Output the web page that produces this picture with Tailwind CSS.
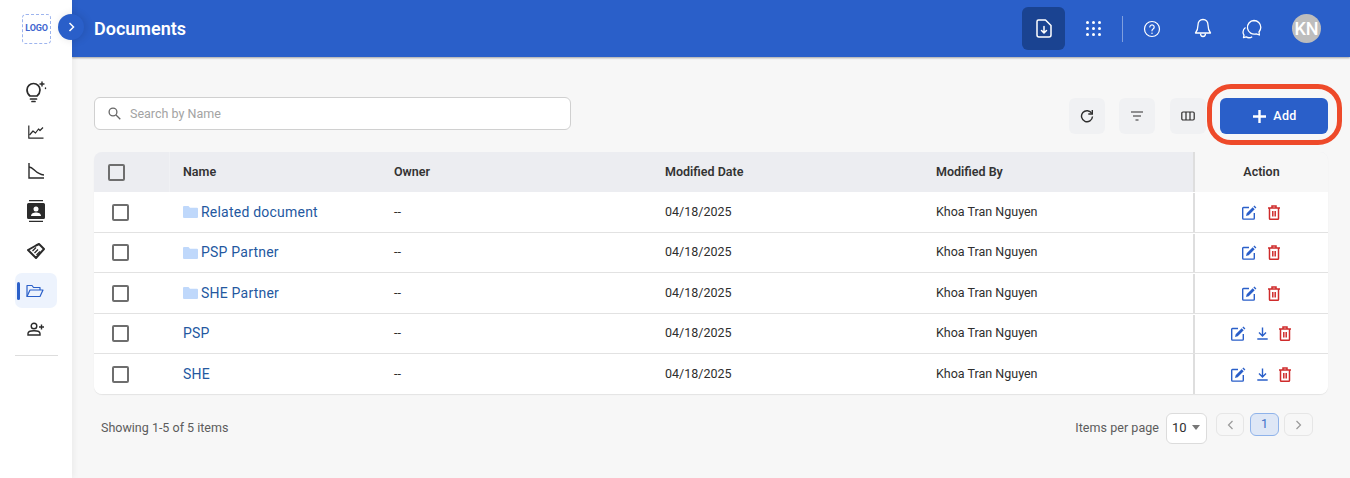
<!DOCTYPE html>
<html lang="en">
<head>
    <meta charset="UTF-8">
    <title>Documents</title>
    <script src="https://cdn.jsdelivr.net/npm/@tailwindcss/browser@4"></script>
</head>
<body class="h-[478px] w-[1350px] overflow-hidden bg-[#f7f7f7] font-['Roboto',sans-serif] text-[#2e2e2e]">
<div class="relative flex h-[478px]">
    <!-- sidebar -->
    <aside class="z-10 flex w-[72px] shrink-0 flex-col items-center bg-white shadow-[2px_0_6px_rgba(0,0,0,.05)]">
        <div class="ml-[1px] mt-[14px] flex h-[30px] w-[29px] items-center justify-center rounded-[4px] border border-dashed border-[#9db4ee] text-[9px] font-bold tracking-[-.2px] text-[#3f66cf]">LOGO</div>
        <nav class="mt-[27px] flex w-full flex-col items-center text-[#2b2b2b]">
            <div class="flex h-[40px] w-full items-center justify-center pt-[2px]">
                <svg width="22" height="22" viewBox="0 0 22 22" fill="none" stroke="currentColor" stroke-width="1.7" stroke-linecap="round" stroke-linejoin="round"><path d="M5 15c-1.500-1.300-3-3-3-6a6.500 6.500 0 0 1 13 0c0 3-1.500 4.700-3 6z"/><path d="M5.500 18h6M7 20.500h3"/><path d="M17 1v4M15 3h4M20.500 7v.5" stroke-width="1.4"/></svg>
            </div>
            <div class="flex h-[42px] w-full items-center justify-center">
                <svg width="16" height="14" viewBox="0 0 16 14" fill="none" stroke="currentColor" stroke-width="1.2" stroke-linejoin="round"><path d="M.8 .5v12.700h14.700"/><path d="M1.500 10l3.500-4 2.500 2 3-4 1.500 1.500 3-3"/></svg>
            </div>
            <div class="flex h-[36px] w-full items-center justify-center">
                <svg width="16" height="16" viewBox="0 0 16 16" fill="none" stroke="currentColor" stroke-width="1.4"><path d="M1 0v15h15"/><path d="M1 4c5 0 6 7 15 8"/></svg>
            </div>
            <div class="flex h-[44px] w-full items-center justify-center">
                <svg width="20" height="24" viewBox="0 0 20 24"><path fill="currentColor" d="M3 1h14v1.300H3zM3 21.700h14V23H3zM2.500 4h15A1.500 1.500 0 0 1 19 5.500v13a1.500 1.500 0 0 1-1.500 1.500h-15A1.500 1.500 0 0 1 1 18.500v-13A1.500 1.500 0 0 1 2.500 4z"/><circle cx="10" cy="10" r="2.500" fill="#fff"/><path fill="#fff" d="M5 17c0-2.500 2.500-3.500 5-3.500s5 1 5 3.500z"/></svg>
            </div>
            <div class="flex h-[36px] w-full items-center justify-center">
                <svg width="18" height="16" viewBox="0 0 18 16" fill="none" stroke="currentColor" stroke-width="2" stroke-linejoin="round"><path d="M9 2.500l3-1.500 5 5-8 9-8-8z"/><path d="M5.500 8l3.500-3.500M7.500 10l3.500-3.500M9.500 12L13 8.500" stroke-width="1.3"/></svg>
            </div>
            <div class="mt-[4px] flex h-[35px] w-[42px] items-center rounded-[7px] bg-[#edf3fd] pl-[2px]">
                <span class="h-[18px] w-[3px] rounded-full bg-[#2b60c9]"></span>
                <svg class="ml-[6px]" width="18" height="14" viewBox="0 0 18 14" fill="none" stroke="#2b60c9" stroke-width="1.2" stroke-linejoin="round"><path d="M1 12.500V1.500h5l1.500 2H14v2.500"/><path d="M1 12.500l3-6.500h13l-3 6.500z"/></svg>
            </div>
            <div class="flex h-[42px] w-full items-center justify-center">
                <svg width="18" height="14" viewBox="0 0 18 14" fill="none" stroke="currentColor" stroke-width="1.4"><circle cx="7" cy="4" r="2.800"/><path d="M1 13v-1.500c0-1.600 3-2.700 6-2.700s6 1.100 6 2.700V13z"/><path d="M14.500 2.500v5M12 5h5"/></svg>
            </div>
            <div class="mt-[5px] h-px w-[43px] bg-[#dddddd]"></div>
        </nav>
    </aside>

    <div class="flex min-w-0 flex-1 flex-col">
        <!-- top bar -->
        <header class="flex h-[57px] shrink-0 items-center justify-between bg-[#2a5fc9] pl-[22px] pr-[29px] shadow-[0_1px_2px_rgba(0,0,0,.35)]">
            <h1 class="text-[18px] font-semibold text-white">Documents</h1>
            <div class="flex items-center text-white">
                <div class="flex h-[43px] w-[43px] items-center justify-center rounded-[6px] bg-[#1a4391]">
                    <svg width="16" height="19" viewBox="0 0 16 19" fill="none" stroke="currentColor" stroke-width="1.5" stroke-linejoin="round" stroke-linecap="round"><path d="M2.500 1h7L15 6.500V16a2 2 0 0 1-2 2H3a2 2 0 0 1-2-2V2.500A1.500 1.500 0 0 1 2.500 1z"/><path d="M8 7.500v6M5.500 11.500L8 14l2.500-2.500"/></svg>
                </div>
                <div class="ml-[21px] grid grid-cols-3 gap-x-[3px] gap-y-[3px]">
                    <i class="h-[3px] w-[3px] rounded-full bg-white"></i><i class="h-[3px] w-[3px] rounded-full bg-white"></i><i class="h-[3px] w-[3px] rounded-full bg-white"></i>
                    <i class="h-[3px] w-[3px] rounded-full bg-white"></i><i class="h-[3px] w-[3px] rounded-full bg-white"></i><i class="h-[3px] w-[3px] rounded-full bg-white"></i>
                    <i class="h-[3px] w-[3px] rounded-full bg-white"></i><i class="h-[3px] w-[3px] rounded-full bg-white"></i><i class="h-[3px] w-[3px] rounded-full bg-white"></i>
                </div>
                <div class="ml-[21px] h-[26px] w-px bg-white/40"></div>
                <svg class="ml-[20px]" width="18" height="18" viewBox="0 0 18 18" fill="none" stroke="currentColor" stroke-width="1.2" stroke-linecap="round"><circle cx="9" cy="9" r="7.500"/><path d="M6.800 7a2.200 2.200 0 1 1 3.300 2c-.8.500-1.100.900-1.100 1.800"/><path d="M9 13.200v.1" stroke-width="1.5"/></svg>
                <svg class="ml-[33px]" width="18" height="21" viewBox="0 0 18 21" fill="none" stroke="currentColor" stroke-width="1.3" stroke-linejoin="round"><path d="M9 1.500c-3 0-5 2.300-5 5.500 0 4-1 6-2.500 8h15C15 13 14 11 14 7c0-3.200-2-5.500-5-5.500z"/><path d="M6.500 15.500a2.500 3 0 0 0 5 0"/></svg>
                <svg class="ml-[30px]" width="20" height="20" viewBox="0 0 20 20" fill="none" stroke="currentColor" stroke-width="1.3" stroke-linejoin="round"><path d="M12 1.500a6.800 6.800 0 0 1 6.800 6.800c0 2-.8 3.500-1.800 4.700l.4 3-3.200-1.200A6.800 6.800 0 1 1 12 1.500z"/><path d="M3.500 8.500C2 9.500 1 11 1 13c0 1.200.4 2.300 1 3.200L1.500 18.700l2.700-.8c1.600 1 4 1.100 6-.2"/></svg>
                <div class="ml-[30px] flex h-[29px] w-[29px] items-center justify-center rounded-full bg-[#bdbdbd] text-[18px] font-medium text-white">KN</div>
            </div>
        </header>

        <main class="flex-1 px-[22px]">
            <!-- toolbar -->
            <div class="mt-[40px] flex h-[37px] items-start">
                <div class="flex h-[33px] w-[477px] items-center rounded-[6px] border border-[#d0d0d0] bg-white pl-[13px]">
                    <svg width="13" height="13" viewBox="0 0 13 13" fill="none" stroke="#666" stroke-width="1.3"><circle cx="5" cy="5" r="3.900"/><path d="M8 8l4.300 4.300"/></svg>
                    <span class="ml-[9px] pt-[2px] text-[12.5px] text-[#a3a3a3]">Search by Name</span>
                </div>
                <div class="ml-auto mt-[1px] flex h-[36px] w-[36px] items-center justify-center rounded-[6px] bg-[#f0f1f3]">
                    <svg width="14" height="14" viewBox="0 0 14 14" fill="none" stroke="#2e2e2e" stroke-width="1.4"><path d="M11.800 4.500A5.500 5.500 0 1 0 12.500 7.500"/><path d="M12.300 1v4h-4"/></svg>
                </div>
                <div class="ml-[14px] mt-[1px] flex h-[36px] w-[36px] items-center justify-center rounded-[6px] bg-[#f0f1f3]">
                    <svg width="14" height="10" viewBox="0 0 14 10" fill="none" stroke="#2e2e2e" stroke-width="1.2"><path d="M1 1h12M3 5h8M5.500 9h3"/></svg>
                </div>
                <div class="ml-[15px] mt-[1px] flex h-[36px] w-[36px] items-center justify-center rounded-[6px] bg-[#f0f1f3]">
                    <svg width="14" height="10" viewBox="0 0 14 10" fill="none" stroke="#2e2e2e" stroke-width="1.2"><rect x=".8" y="1" width="12.400" height="8" rx="1.200"/><path d="M5 1v8M9 1v8"/></svg>
                </div>
                <button class="ml-[14px] mt-[1px] flex h-[36px] w-[108px] items-center justify-center gap-[7px] rounded-[6px] bg-[#2a5fc9] pl-[2px] text-[12.5px] font-medium tracking-[.3px] text-white">
                    <svg width="13" height="13" viewBox="0 0 13 13" stroke="#fff" stroke-width="2.4"><path d="M6.500 0v13M0 6.500h13"/></svg>
                    Add
                </button>
            </div>

            <!-- table -->
            <div class="mt-[18px] overflow-hidden rounded-[8px] text-[12.5px] shadow-[0_1px_1px_rgba(0,0,0,.08)]">
                <div class="flex h-[40px] items-center bg-[#ecedf1] font-semibold text-[#333]">
                    <div class="flex h-full w-[76px] items-center border-r border-[#f0f1f4] pl-[14px]"><span class="h-[17px] w-[17px] rounded-[2px] border-2 border-[#6e6e6e]"></span></div>
                    <div class="w-[210px] pl-[13px]">Name</div>
                    <div class="w-[271px] pl-[14px]">Owner</div>
                    <div class="w-[271px] pl-[14px]">Modified Date</div>
                    <div class="w-[271px] pl-[14px]">Modified By</div>
                    <div class="flex h-full w-[135px] items-center justify-center border-l-2 border-[#dedede] bg-[#f7f7f7]">Action</div>
                </div>

                <div class="flex h-[40.5px] items-center border-b border-[#e2e2e2] bg-white pt-[1px]">
                    <div class="w-[76px] pl-[18px]"><span class="block h-[17px] w-[17px] rounded-[2px] border-2 border-[#6e6e6e]"></span></div>
                    <div class="flex w-[210px] items-center gap-[3px] pl-[13px] text-[14px] tracking-[.22px] text-[#24589f]"><svg width="15" height="12" viewBox="0 0 15 12" fill="#bfd8fb"><path d="M0 1a1 1 0 0 1 1-1h4.500l1.500 1.800h7a1 1 0 0 1 1 1V11a1 1 0 0 1-1 1H1a1 1 0 0 1-1-1z"/></svg>Related document</div>
                    <div class="w-[271px] pl-[14px]">--</div>
                    <div class="w-[271px] pl-[14px]">04/18/2025</div>
                    <div class="w-[271px] pl-[14px]">Khoa Tran Nguyen</div>
                    <div class="flex h-full w-[135px] items-center justify-center gap-[11px] border-l-2 border-[#dedede] pr-[2px]">
                        <svg width="15" height="15" viewBox="0 0 15 15" fill="none" stroke="#2a5fc9" stroke-width="1.4"><path d="M7 2.500H1.500a.8.800 0 0 0-.8.800v10a.8.800 0 0 0 .8.800h10a.8.800 0 0 0 .8-.8V8"/><path fill="#2a5fc9" stroke="none" d="M12.400.6l2 2-1 1-2-2zM10.700 2.300l2 2-6 6-2.700.700.700-2.700z"/></svg>
                        <svg width="12" height="15" viewBox="0 0 12 15" fill="none" stroke="#cf2b2b" stroke-width="1.5"><path d="M0 3h12M4 3V1h4v2M1.500 3v10.500a.8.800 0 0 0 .8.800h7.400a.8.800 0 0 0 .8-.8V3M4.800 6v5.500M7.200 6v5.500"/></svg>
                    </div>
                </div>

                <div class="flex h-[40.5px] items-center border-b border-[#e2e2e2] bg-white pt-[1px]">
                    <div class="w-[76px] pl-[18px]"><span class="block h-[17px] w-[17px] rounded-[2px] border-2 border-[#6e6e6e]"></span></div>
                    <div class="flex w-[210px] items-center gap-[3px] pl-[13px] text-[14px] tracking-[.22px] text-[#24589f]"><svg width="15" height="12" viewBox="0 0 15 12" fill="#bfd8fb"><path d="M0 1a1 1 0 0 1 1-1h4.500l1.500 1.800h7a1 1 0 0 1 1 1V11a1 1 0 0 1-1 1H1a1 1 0 0 1-1-1z"/></svg>PSP Partner</div>
                    <div class="w-[271px] pl-[14px]">--</div>
                    <div class="w-[271px] pl-[14px]">04/18/2025</div>
                    <div class="w-[271px] pl-[14px]">Khoa Tran Nguyen</div>
                    <div class="flex h-full w-[135px] items-center justify-center gap-[11px] border-l-2 border-[#dedede] pr-[2px]">
                        <svg width="15" height="15" viewBox="0 0 15 15" fill="none" stroke="#2a5fc9" stroke-width="1.4"><path d="M7 2.500H1.500a.8.800 0 0 0-.8.800v10a.8.800 0 0 0 .8.800h10a.8.800 0 0 0 .8-.8V8"/><path fill="#2a5fc9" stroke="none" d="M12.400.6l2 2-1 1-2-2zM10.700 2.300l2 2-6 6-2.700.700.700-2.700z"/></svg>
                        <svg width="12" height="15" viewBox="0 0 12 15" fill="none" stroke="#cf2b2b" stroke-width="1.5"><path d="M0 3h12M4 3V1h4v2M1.500 3v10.500a.8.800 0 0 0 .8.800h7.400a.8.800 0 0 0 .8-.8V3M4.800 6v5.500M7.200 6v5.500"/></svg>
                    </div>
                </div>

                <div class="flex h-[40.5px] items-center border-b border-[#e2e2e2] bg-white pt-[1px]">
                    <div class="w-[76px] pl-[18px]"><span class="block h-[17px] w-[17px] rounded-[2px] border-2 border-[#6e6e6e]"></span></div>
                    <div class="flex w-[210px] items-center gap-[3px] pl-[13px] text-[14px] tracking-[.22px] text-[#24589f]"><svg width="15" height="12" viewBox="0 0 15 12" fill="#bfd8fb"><path d="M0 1a1 1 0 0 1 1-1h4.500l1.500 1.800h7a1 1 0 0 1 1 1V11a1 1 0 0 1-1 1H1a1 1 0 0 1-1-1z"/></svg>SHE Partner</div>
                    <div class="w-[271px] pl-[14px]">--</div>
                    <div class="w-[271px] pl-[14px]">04/18/2025</div>
                    <div class="w-[271px] pl-[14px]">Khoa Tran Nguyen</div>
                    <div class="flex h-full w-[135px] items-center justify-center gap-[11px] border-l-2 border-[#dedede] pr-[2px]">
                        <svg width="15" height="15" viewBox="0 0 15 15" fill="none" stroke="#2a5fc9" stroke-width="1.4"><path d="M7 2.500H1.500a.8.800 0 0 0-.8.800v10a.8.800 0 0 0 .8.800h10a.8.800 0 0 0 .8-.8V8"/><path fill="#2a5fc9" stroke="none" d="M12.400.6l2 2-1 1-2-2zM10.700 2.300l2 2-6 6-2.700.700.700-2.700z"/></svg>
                        <svg width="12" height="15" viewBox="0 0 12 15" fill="none" stroke="#cf2b2b" stroke-width="1.5"><path d="M0 3h12M4 3V1h4v2M1.500 3v10.500a.8.800 0 0 0 .8.800h7.400a.8.800 0 0 0 .8-.8V3M4.800 6v5.500M7.200 6v5.500"/></svg>
                    </div>
                </div>

                <div class="flex h-[40.5px] items-center border-b border-[#e2e2e2] bg-white pt-[1px]">
                    <div class="w-[76px] pl-[18px]"><span class="block h-[17px] w-[17px] rounded-[2px] border-2 border-[#6e6e6e]"></span></div>
                    <div class="w-[210px] pl-[13px] text-[14px] tracking-[.22px] text-[#24589f]">PSP</div>
                    <div class="w-[271px] pl-[14px]">--</div>
                    <div class="w-[271px] pl-[14px]">04/18/2025</div>
                    <div class="w-[271px] pl-[14px]">Khoa Tran Nguyen</div>
                    <div class="flex h-full w-[135px] items-center justify-center gap-[11px] border-l-2 border-[#dedede] pr-[2px]">
                        <svg width="15" height="15" viewBox="0 0 15 15" fill="none" stroke="#2a5fc9" stroke-width="1.4"><path d="M7 2.500H1.500a.8.800 0 0 0-.8.800v10a.8.800 0 0 0 .8.800h10a.8.800 0 0 0 .8-.8V8"/><path fill="#2a5fc9" stroke="none" d="M12.400.6l2 2-1 1-2-2zM10.700 2.300l2 2-6 6-2.700.700.700-2.700z"/></svg>
                        <svg width="11" height="13" viewBox="0 0 11 13" fill="none" stroke="#2a5fc9" stroke-width="1.4"><path d="M5.500 .5v8M2 5.500l3.500 3.500L9 5.500M.3 12h10.400"/></svg>
                        <svg width="12" height="15" viewBox="0 0 12 15" fill="none" stroke="#cf2b2b" stroke-width="1.5"><path d="M0 3h12M4 3V1h4v2M1.500 3v10.500a.8.800 0 0 0 .8.800h7.400a.8.800 0 0 0 .8-.8V3M4.800 6v5.500M7.200 6v5.500"/></svg>
                    </div>
                </div>

                <div class="flex h-[40px] items-center bg-white">
                    <div class="w-[76px] pl-[18px]"><span class="block h-[17px] w-[17px] rounded-[2px] border-2 border-[#6e6e6e]"></span></div>
                    <div class="w-[210px] pl-[13px] text-[14px] tracking-[.22px] text-[#24589f]">SHE</div>
                    <div class="w-[271px] pl-[14px]">--</div>
                    <div class="w-[271px] pl-[14px]">04/18/2025</div>
                    <div class="w-[271px] pl-[14px]">Khoa Tran Nguyen</div>
                    <div class="flex h-full w-[135px] items-center justify-center gap-[11px] border-l-2 border-[#dedede] pr-[2px]">
                        <svg width="15" height="15" viewBox="0 0 15 15" fill="none" stroke="#2a5fc9" stroke-width="1.4"><path d="M7 2.500H1.500a.8.800 0 0 0-.8.800v10a.8.800 0 0 0 .8.800h10a.8.800 0 0 0 .8-.8V8"/><path fill="#2a5fc9" stroke="none" d="M12.400.6l2 2-1 1-2-2zM10.700 2.300l2 2-6 6-2.700.700.700-2.700z"/></svg>
                        <svg width="11" height="13" viewBox="0 0 11 13" fill="none" stroke="#2a5fc9" stroke-width="1.4"><path d="M5.500 .5v8M2 5.500l3.500 3.500L9 5.500M.3 12h10.400"/></svg>
                        <svg width="12" height="15" viewBox="0 0 12 15" fill="none" stroke="#cf2b2b" stroke-width="1.5"><path d="M0 3h12M4 3V1h4v2M1.500 3v10.500a.8.800 0 0 0 .8.800h7.400a.8.800 0 0 0 .8-.8V3M4.800 6v5.500M7.200 6v5.500"/></svg>
                    </div>
                </div>
            </div>

            <!-- pagination -->
            <div class="mt-[19px] flex items-start pl-[7px] pr-[15px] text-[12.5px] text-[#5c5c5c]">
                <span class="leading-[30px]">Showing 1-5 of 5 items</span>
                <span class="ml-auto leading-[30px] tracking-[.05px]">Items per page</span>
                <div class="ml-[7px] flex h-[31px] w-[41px] items-center justify-between rounded-[6px] border border-[#dcdcdc] bg-white pb-[2px] pl-[5px] pr-[6px] text-[13px] text-[#2e2e2e]">10<i class="h-0 w-0 border-x-[4.5px] border-t-[5px] border-x-transparent border-t-[#777]"></i></div>
                <div class="ml-[9px] flex h-[23px] w-[28px] items-center justify-center rounded-[6px] border border-[#e6e6e6]"><svg width="7" height="10" viewBox="0 0 7 10" fill="none" stroke="#999" stroke-width="1.2"><path d="M5.500 1l-4 4 4 4"/></svg></div>
                <div class="ml-[6px] flex h-[23px] w-[29px] items-center justify-center rounded-[6px] border border-[#8fb3ea] bg-[#dee7f6] text-[#3f73c8]">1</div>
                <div class="ml-[5px] flex h-[23px] w-[29px] items-center justify-center rounded-[6px] border border-[#e6e6e6]"><svg width="7" height="10" viewBox="0 0 7 10" fill="none" stroke="#999" stroke-width="1.2"><path d="M1.500 1l4 4-4 4"/></svg></div>
            </div>
        </main>
    </div>

    <!-- sidebar toggle, sits over the header edge -->
    <div class="absolute left-[58px] top-[14px] z-20 flex h-[26px] w-[26px] items-center justify-center rounded-full bg-[#2a5fc9] shadow-[2px_0_8px_rgba(0,0,0,.12)]">
        <svg width="7" height="10" viewBox="0 0 7 10" fill="none" stroke="#fff" stroke-width="1.5"><path d="M1.500 1l4 4-4 4"/></svg>
    </div>
    <!-- red annotation round the Add button -->
    <div class="pointer-events-none absolute left-[1207px] top-[84px] z-20 h-[61px] w-[135px] rounded-[24px] border-[5px] border-[#ee4a2a]"></div>
</div>
</body>
</html>
